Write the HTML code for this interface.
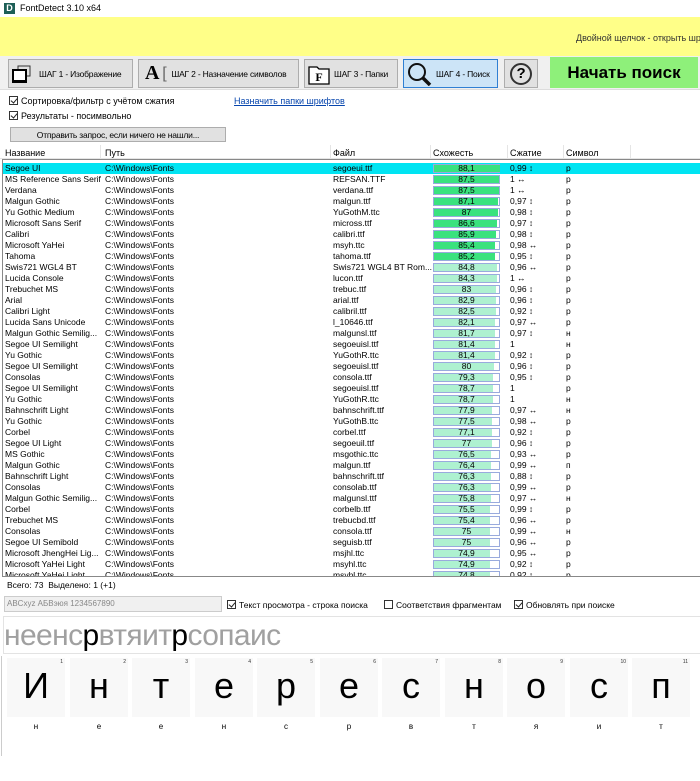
<!DOCTYPE html>
<html><head><meta charset="utf-8"><style>
*{box-sizing:border-box;margin:0;padding:0}
body{width:700px;height:781px;background:#fff;font-family:"Liberation Sans",sans-serif;font-size:9px;color:#000;position:relative;overflow:hidden}
.a{position:absolute;white-space:nowrap}
.btn{position:absolute;background:#e1e1e1;border:1px solid #adadad;font-size:8.5px;display:flex;align-items:center;white-space:nowrap;letter-spacing:-0.2px}
.cb{display:inline-block;width:9px;height:9px;border:1px solid #333;vertical-align:-1px;margin-right:3px;position:relative;background:#fff}
.cb.k::after{content:"";position:absolute;left:2px;top:0px;width:3px;height:5px;border:solid #222;border-width:0 1px 1px 0;transform:rotate(40deg)}
.r{position:absolute;left:3px;width:697px;height:11px;font-size:8.5px;line-height:11px}
.r span{position:absolute;top:0}
.c1{left:2px}.c2{left:102px}.c3{left:330px}.c5{left:507px}.c6{left:563px}
.bar{position:absolute;left:430px;top:1px;width:67px;height:9px;background:#fff;border:1px solid #9ad;}
.bar i{position:absolute;left:0;top:0;bottom:0;background:#3ae27e}
.bar.l i{background:#aef1d0}
.bar b{position:absolute;left:0;right:0;top:0;text-align:center;font-weight:normal;line-height:7px;font-size:8.5px}
.cell{position:absolute;top:658px;width:58px;height:59px;background:#f8f8f8}
.cell .n{position:absolute;right:2px;top:1px;font-size:5px;color:#333}
.cell .g{position:absolute;left:0;right:0;top:8px;text-align:center;font-size:36px;line-height:40px}
.lb{position:absolute;top:722px;width:58px;text-align:center;font-size:8px}
</style></head><body>
<div class="a" style="left:4px;top:3px;width:11px;height:11px;background:#1d5f57;color:#fff;font-size:9px;font-weight:bold;text-align:center;line-height:11px">D</div>
<div class="a" style="left:20px;top:3px;font-size:9px">FontDetect 3.10 x64</div>
<div class="a" style="left:0;top:17px;width:700px;height:39px;background:#ffff88"></div>
<div class="a" style="left:576px;top:33px;font-size:9px;color:#333">Двойной щелчок - открыть шр</div>
<div class="a" style="left:0;top:56px;width:700px;height:34px;background:#f0f0f0;border-bottom:1px solid #ddd"></div>
<div class="btn" style="left:8px;top:59px;width:125px;height:29px"><svg width="22" height="20" style="margin:0 5px 0 3px;flex:none"><rect x="6" y="2" width="12" height="10" fill="none" stroke="#333"/><rect x="1" y="6" width="13" height="12" fill="#fff" stroke="#000" stroke-width="2"/><rect x="1" y="16" width="13" height="3" fill="#000"/></svg>ШАГ 1 - Изображение</div>
<div class="btn" style="left:138px;top:59px;width:161px;height:29px"><span style="font-family:'Liberation Serif';font-weight:bold;font-size:20px;margin:0 3px 0 6px">A</span><span style="font-size:16px;color:#666;margin-right:5px">[</span>ШАГ 2 - Назначение символов</div>
<div class="btn" style="left:304px;top:59px;width:94px;height:29px"><svg width="22" height="22" style="margin:0 4px 0 3px;flex:none"><path d="M1 4h8l2 2h10v15H1z" fill="#fff" stroke="#000" stroke-width="1.3"/><text x="11" y="18" font-family="Liberation Serif" font-weight="bold" font-size="12" text-anchor="middle">F</text></svg>ШАГ 3 - Папки</div>
<div class="btn" style="left:403px;top:59px;width:95px;height:29px;background:#cce4f7;border-color:#2f7fd3"><svg width="26" height="24" style="margin:0 3px 0 3px;flex:none"><circle cx="10" cy="10" r="8" fill="none" stroke="#111" stroke-width="2"/><path d="M16 16l7 7" stroke="#111" stroke-width="3.5"/></svg>ШАГ 4 - Поиск</div>
<div class="btn" style="left:504px;top:59px;width:34px;height:29px;justify-content:center"><div style="width:22px;height:22px;border:2px solid #333;border-radius:50%;text-align:center;font-weight:bold;font-size:15px;line-height:18px">?</div></div>
<div class="a" style="left:550px;top:57px;width:148px;height:31px;background:#8ef07a;font-size:17px;font-weight:bold;text-align:center;line-height:31px">Начать поиск</div>
<div class="a" style="left:9px;top:96px"><span class="cb k"></span>Сортировка/фильтр с учётом сжатия</div>
<div class="a" style="left:234px;top:96px;color:#0645ad;text-decoration:underline">Назначить папки шрифтов</div>
<div class="a" style="left:9px;top:111px"><span class="cb k"></span>Результаты - посимвольно</div>
<div class="btn" style="left:10px;top:127px;width:216px;height:15px;justify-content:center">Отправить запрос, если ничего не нашли...</div>
<div class="a" style="left:0;top:145px;width:700px;height:14px;border-bottom:1px solid #e5e5e5"></div>
<div class="a" style="left:5px;top:148px">Название</div>
<div class="a" style="left:105px;top:148px">Путь</div>
<div class="a" style="left:333px;top:148px">Файл</div>
<div class="a" style="left:433px;top:148px">Схожесть</div>
<div class="a" style="left:510px;top:148px">Сжатие</div>
<div class="a" style="left:566px;top:148px">Символ</div>
<div class="a" style="left:100px;top:145px;width:1px;height:14px;background:#e5e5e5"></div>
<div class="a" style="left:330px;top:145px;width:1px;height:14px;background:#e5e5e5"></div>
<div class="a" style="left:430px;top:145px;width:1px;height:14px;background:#e5e5e5"></div>
<div class="a" style="left:507px;top:145px;width:1px;height:14px;background:#e5e5e5"></div>
<div class="a" style="left:563px;top:145px;width:1px;height:14px;background:#e5e5e5"></div>
<div class="a" style="left:630px;top:145px;width:1px;height:14px;background:#e5e5e5"></div>
<div class="a" style="left:2px;top:159px;width:698px;height:418px;border:1px solid #888;border-right:none;overflow:hidden">
<div style="position:relative;left:-3px;top:-160px">
<div class="r" style="top:163px;background:#00e4f2"><span class="c1">Segoe UI</span><span class="c2">C:\Windows\Fonts</span><span class="c3">segoeui.ttf</span><div class="bar"><i style="width:66px"></i><b>88,1</b></div><span class="c5">0,99 ↕</span><span class="c6">p</span></div>
<div class="r" style="top:174px"><span class="c1">MS Reference Sans Serif</span><span class="c2">C:\Windows\Fonts</span><span class="c3">REFSAN.TTF</span><div class="bar"><i style="width:65px"></i><b>87,5</b></div><span class="c5">1 ↔</span><span class="c6">p</span></div>
<div class="r" style="top:185px"><span class="c1">Verdana</span><span class="c2">C:\Windows\Fonts</span><span class="c3">verdana.ttf</span><div class="bar"><i style="width:65px"></i><b>87,5</b></div><span class="c5">1 ↔</span><span class="c6">p</span></div>
<div class="r" style="top:196px"><span class="c1">Malgun Gothic</span><span class="c2">C:\Windows\Fonts</span><span class="c3">malgun.ttf</span><div class="bar"><i style="width:64px"></i><b>87,1</b></div><span class="c5">0,97 ↕</span><span class="c6">p</span></div>
<div class="r" style="top:207px"><span class="c1">Yu Gothic Medium</span><span class="c2">C:\Windows\Fonts</span><span class="c3">YuGothM.ttc</span><div class="bar"><i style="width:64px"></i><b>87</b></div><span class="c5">0,98 ↕</span><span class="c6">p</span></div>
<div class="r" style="top:218px"><span class="c1">Microsoft Sans Serif</span><span class="c2">C:\Windows\Fonts</span><span class="c3">micross.ttf</span><div class="bar"><i style="width:63px"></i><b>86,6</b></div><span class="c5">0,97 ↕</span><span class="c6">p</span></div>
<div class="r" style="top:229px"><span class="c1">Calibri</span><span class="c2">C:\Windows\Fonts</span><span class="c3">calibri.ttf</span><div class="bar"><i style="width:62px"></i><b>85,9</b></div><span class="c5">0,98 ↕</span><span class="c6">p</span></div>
<div class="r" style="top:240px"><span class="c1">Microsoft YaHei</span><span class="c2">C:\Windows\Fonts</span><span class="c3">msyh.ttc</span><div class="bar"><i style="width:61px"></i><b>85,4</b></div><span class="c5">0,98 ↔</span><span class="c6">p</span></div>
<div class="r" style="top:251px"><span class="c1">Tahoma</span><span class="c2">C:\Windows\Fonts</span><span class="c3">tahoma.ttf</span><div class="bar"><i style="width:61px"></i><b>85,2</b></div><span class="c5">0,95 ↕</span><span class="c6">p</span></div>
<div class="r" style="top:262px"><span class="c1">Swis721 WGL4 BT</span><span class="c2">C:\Windows\Fonts</span><span class="c3">Swis721 WGL4 BT Rom...</span><div class="bar l"><i style="width:63px"></i><b>84,8</b></div><span class="c5">0,96 ↔</span><span class="c6">p</span></div>
<div class="r" style="top:273px"><span class="c1">Lucida Console</span><span class="c2">C:\Windows\Fonts</span><span class="c3">lucon.ttf</span><div class="bar l"><i style="width:63px"></i><b>84,3</b></div><span class="c5">1 ↔</span><span class="c6">p</span></div>
<div class="r" style="top:284px"><span class="c1">Trebuchet MS</span><span class="c2">C:\Windows\Fonts</span><span class="c3">trebuc.ttf</span><div class="bar l"><i style="width:62px"></i><b>83</b></div><span class="c5">0,96 ↕</span><span class="c6">p</span></div>
<div class="r" style="top:295px"><span class="c1">Arial</span><span class="c2">C:\Windows\Fonts</span><span class="c3">arial.ttf</span><div class="bar l"><i style="width:62px"></i><b>82,9</b></div><span class="c5">0,96 ↕</span><span class="c6">p</span></div>
<div class="r" style="top:306px"><span class="c1">Calibri Light</span><span class="c2">C:\Windows\Fonts</span><span class="c3">calibril.ttf</span><div class="bar l"><i style="width:62px"></i><b>82,5</b></div><span class="c5">0,92 ↕</span><span class="c6">p</span></div>
<div class="r" style="top:317px"><span class="c1">Lucida Sans Unicode</span><span class="c2">C:\Windows\Fonts</span><span class="c3">l_10646.ttf</span><div class="bar l"><i style="width:61px"></i><b>82,1</b></div><span class="c5">0,97 ↔</span><span class="c6">p</span></div>
<div class="r" style="top:328px"><span class="c1">Malgun Gothic Semilig...</span><span class="c2">C:\Windows\Fonts</span><span class="c3">malgunsl.ttf</span><div class="bar l"><i style="width:61px"></i><b>81,7</b></div><span class="c5">0,97 ↕</span><span class="c6">н</span></div>
<div class="r" style="top:339px"><span class="c1">Segoe UI Semilight</span><span class="c2">C:\Windows\Fonts</span><span class="c3">segoeuisl.ttf</span><div class="bar l"><i style="width:61px"></i><b>81,4</b></div><span class="c5">1</span><span class="c6">н</span></div>
<div class="r" style="top:350px"><span class="c1">Yu Gothic</span><span class="c2">C:\Windows\Fonts</span><span class="c3">YuGothR.ttc</span><div class="bar l"><i style="width:61px"></i><b>81,4</b></div><span class="c5">0,92 ↕</span><span class="c6">p</span></div>
<div class="r" style="top:361px"><span class="c1">Segoe UI Semilight</span><span class="c2">C:\Windows\Fonts</span><span class="c3">segoeuisl.ttf</span><div class="bar l"><i style="width:60px"></i><b>80</b></div><span class="c5">0,96 ↕</span><span class="c6">p</span></div>
<div class="r" style="top:372px"><span class="c1">Consolas</span><span class="c2">C:\Windows\Fonts</span><span class="c3">consola.ttf</span><div class="bar l"><i style="width:59px"></i><b>79,3</b></div><span class="c5">0,95 ↕</span><span class="c6">p</span></div>
<div class="r" style="top:383px"><span class="c1">Segoe UI Semilight</span><span class="c2">C:\Windows\Fonts</span><span class="c3">segoeuisl.ttf</span><div class="bar l"><i style="width:59px"></i><b>78,7</b></div><span class="c5">1</span><span class="c6">p</span></div>
<div class="r" style="top:394px"><span class="c1">Yu Gothic</span><span class="c2">C:\Windows\Fonts</span><span class="c3">YuGothR.ttc</span><div class="bar l"><i style="width:59px"></i><b>78,7</b></div><span class="c5">1</span><span class="c6">н</span></div>
<div class="r" style="top:405px"><span class="c1">Bahnschrift Light</span><span class="c2">C:\Windows\Fonts</span><span class="c3">bahnschrift.ttf</span><div class="bar l"><i style="width:58px"></i><b>77,9</b></div><span class="c5">0,97 ↔</span><span class="c6">н</span></div>
<div class="r" style="top:416px"><span class="c1">Yu Gothic</span><span class="c2">C:\Windows\Fonts</span><span class="c3">YuGothB.ttc</span><div class="bar l"><i style="width:58px"></i><b>77,5</b></div><span class="c5">0,98 ↔</span><span class="c6">p</span></div>
<div class="r" style="top:427px"><span class="c1">Corbel</span><span class="c2">C:\Windows\Fonts</span><span class="c3">corbel.ttf</span><div class="bar l"><i style="width:58px"></i><b>77,1</b></div><span class="c5">0,92 ↕</span><span class="c6">p</span></div>
<div class="r" style="top:438px"><span class="c1">Segoe UI Light</span><span class="c2">C:\Windows\Fonts</span><span class="c3">segoeuil.ttf</span><div class="bar l"><i style="width:58px"></i><b>77</b></div><span class="c5">0,96 ↕</span><span class="c6">p</span></div>
<div class="r" style="top:449px"><span class="c1">MS Gothic</span><span class="c2">C:\Windows\Fonts</span><span class="c3">msgothic.ttc</span><div class="bar l"><i style="width:57px"></i><b>76,5</b></div><span class="c5">0,93 ↔</span><span class="c6">p</span></div>
<div class="r" style="top:460px"><span class="c1">Malgun Gothic</span><span class="c2">C:\Windows\Fonts</span><span class="c3">malgun.ttf</span><div class="bar l"><i style="width:57px"></i><b>76,4</b></div><span class="c5">0,99 ↔</span><span class="c6">п</span></div>
<div class="r" style="top:471px"><span class="c1">Bahnschrift Light</span><span class="c2">C:\Windows\Fonts</span><span class="c3">bahnschrift.ttf</span><div class="bar l"><i style="width:57px"></i><b>76,3</b></div><span class="c5">0,88 ↕</span><span class="c6">p</span></div>
<div class="r" style="top:482px"><span class="c1">Consolas</span><span class="c2">C:\Windows\Fonts</span><span class="c3">consolab.ttf</span><div class="bar l"><i style="width:57px"></i><b>76,3</b></div><span class="c5">0,99 ↔</span><span class="c6">p</span></div>
<div class="r" style="top:493px"><span class="c1">Malgun Gothic Semilig...</span><span class="c2">C:\Windows\Fonts</span><span class="c3">malgunsl.ttf</span><div class="bar l"><i style="width:57px"></i><b>75,8</b></div><span class="c5">0,97 ↔</span><span class="c6">н</span></div>
<div class="r" style="top:504px"><span class="c1">Corbel</span><span class="c2">C:\Windows\Fonts</span><span class="c3">corbelb.ttf</span><div class="bar l"><i style="width:56px"></i><b>75,5</b></div><span class="c5">0,99 ↕</span><span class="c6">p</span></div>
<div class="r" style="top:515px"><span class="c1">Trebuchet MS</span><span class="c2">C:\Windows\Fonts</span><span class="c3">trebucbd.ttf</span><div class="bar l"><i style="width:56px"></i><b>75,4</b></div><span class="c5">0,96 ↔</span><span class="c6">p</span></div>
<div class="r" style="top:526px"><span class="c1">Consolas</span><span class="c2">C:\Windows\Fonts</span><span class="c3">consola.ttf</span><div class="bar l"><i style="width:56px"></i><b>75</b></div><span class="c5">0,99 ↔</span><span class="c6">н</span></div>
<div class="r" style="top:537px"><span class="c1">Segoe UI Semibold</span><span class="c2">C:\Windows\Fonts</span><span class="c3">seguisb.ttf</span><div class="bar l"><i style="width:56px"></i><b>75</b></div><span class="c5">0,96 ↔</span><span class="c6">p</span></div>
<div class="r" style="top:548px"><span class="c1">Microsoft JhengHei Lig...</span><span class="c2">C:\Windows\Fonts</span><span class="c3">msjhl.ttc</span><div class="bar l"><i style="width:56px"></i><b>74,9</b></div><span class="c5">0,95 ↔</span><span class="c6">p</span></div>
<div class="r" style="top:559px"><span class="c1">Microsoft YaHei Light</span><span class="c2">C:\Windows\Fonts</span><span class="c3">msyhl.ttc</span><div class="bar l"><i style="width:56px"></i><b>74,9</b></div><span class="c5">0,92 ↕</span><span class="c6">p</span></div>
<div class="r" style="top:570px"><span class="c1">Microsoft YaHei Light</span><span class="c2">C:\Windows\Fonts</span><span class="c3">msyhl.ttc</span><div class="bar l"><i style="width:56px"></i><b>74,8</b></div><span class="c5">0,92 ↕</span><span class="c6">p</span></div>
</div></div>
<div class="a" style="left:7px;top:580px;font-size:8.5px">Всего: 73&nbsp;&nbsp;Выделено: 1 (+1)</div>
<div class="a" style="left:4px;top:596px;width:218px;height:16px;background:#f0f0f0;border:1px solid #ccc;color:#888;font-size:8px;line-height:14px;padding-left:2px">ABCxyz АБВэюя 1234567890</div>
<div class="a" style="left:227px;top:600px;font-size:8.5px"><span class="cb k"></span>Текст просмотра - строка поиска</div>
<div class="a" style="left:384px;top:600px;font-size:8.5px"><span class="cb"></span>Соответствия фрагментам</div>
<div class="a" style="left:514px;top:600px;font-size:8.5px"><span class="cb k"></span>Обновлять при поиске</div>
<div class="a" style="left:3px;top:616px;width:697px;height:38px;border:1px solid #e3e3e3;border-right:none"></div>
<div class="a" style="left:4px;top:617px;font-size:30px;color:#a0a0a0;line-height:38px;letter-spacing:-0.6px">неенс<span style="color:#000">р</span>втяит<span style="color:#000">р</span>сопаис</div>
<div class="a" style="left:1px;top:656px;width:1px;height:100px;background:#ccc"></div>
<div class="cell" style="left:7px"><span class="n">1</span><div class="g">И</div></div>
<div class="cell" style="left:70px"><span class="n">2</span><div class="g">н</div></div>
<div class="cell" style="left:132px"><span class="n">3</span><div class="g">т</div></div>
<div class="cell" style="left:195px"><span class="n">4</span><div class="g">е</div></div>
<div class="cell" style="left:257px"><span class="n">5</span><div class="g">р</div></div>
<div class="cell" style="left:320px"><span class="n">6</span><div class="g">е</div></div>
<div class="cell" style="left:382px"><span class="n">7</span><div class="g">с</div></div>
<div class="cell" style="left:445px"><span class="n">8</span><div class="g">н</div></div>
<div class="cell" style="left:507px"><span class="n">9</span><div class="g">о</div></div>
<div class="cell" style="left:570px"><span class="n">10</span><div class="g">с</div></div>
<div class="cell" style="left:632px"><span class="n">11</span><div class="g">п</div></div>
<div class="lb" style="left:7px">н</div><div class="lb" style="left:70px">е</div><div class="lb" style="left:132px">е</div><div class="lb" style="left:195px">н</div><div class="lb" style="left:257px">с</div><div class="lb" style="left:320px">р</div><div class="lb" style="left:382px">в</div><div class="lb" style="left:445px">т</div><div class="lb" style="left:507px">я</div><div class="lb" style="left:570px">и</div><div class="lb" style="left:632px">т</div>
</body></html>
